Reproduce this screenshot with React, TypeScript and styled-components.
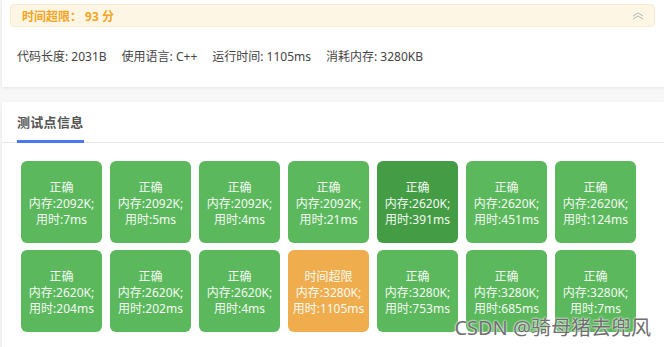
import * as React from "react";
import styled, {createGlobalStyle} from "styled-components";

type Status = "ok" | "okActive" | "tle";

type Point = { status: Status, mem: string, time: string }

const points: Point[] = [
    {status: "ok", mem: "2092K", time: "7ms"},
    {status: "ok", mem: "2092K", time: "5ms"},
    {status: "ok", mem: "2092K", time: "4ms"},
    {status: "ok", mem: "2092K", time: "21ms"},
    {status: "okActive", mem: "2620K", time: "391ms"},
    {status: "ok", mem: "2620K", time: "451ms"},
    {status: "ok", mem: "2620K", time: "124ms"},
    {status: "ok", mem: "2620K", time: "204ms"},
    {status: "ok", mem: "2620K", time: "202ms"},
    {status: "ok", mem: "2620K", time: "4ms"},
    {status: "tle", mem: "3280K", time: "1105ms"},
    {status: "ok", mem: "3280K", time: "753ms"},
    {status: "ok", mem: "3280K", time: "685ms"},
    {status: "ok", mem: "3280K", time: "7ms"},
]

const colors: Record<Status, string> = {
    ok: "#5cb85c",
    okActive: "#449d44",
    tle: "#f0ad4e",
}

const labels: Record<Status, string> = {
    ok: "正确",
    okActive: "正确",
    tle: "时间超限",
}

export default function App() {
    return <Page>
        <GlobalStyle/>

        <Panel>
            <Alert>
                <AlertTitle>时间超限： 93 分</AlertTitle>
                <svg width="12" height="8" viewBox="0 0 12 8" fill="none" stroke="#b8b8b8" strokeWidth="1">
                    <path d="M1 4 L6 1 L11 4"/>
                    <path d="M1 7 L6 4 L11 7"/>
                </svg>
            </Alert>
            <Stats>
                <span>代码长度: 2031B</span>
                <span>使用语言: C++</span>
                <span>运行时间: 1105ms</span>
                <span>消耗内存: 3280KB</span>
            </Stats>
        </Panel>

        <TestPanel>
            <TabBar>
                <Tab>测试点信息</Tab>
            </TabBar>
            <Grid>
                {points.map((p, i) =>
                    <Case key={i} color={colors[p.status]}>
                        <div>{labels[p.status]}</div>
                        <div>内存:{p.mem};</div>
                        <div>用时:{p.time}</div>
                    </Case>
                )}
            </Grid>
        </TestPanel>

        <Watermark>CSDN @骑母猪去兜风</Watermark>
    </Page>
}

const GlobalStyle = createGlobalStyle`
  body {
    margin: 0;
    background: #f7f7f7;
    font-family: "Noto Sans", "Noto Sans CJK SC", sans-serif;
  }
`

const Page = styled.div`
  position: relative;
  width: 664px;
  height: 347px;
  overflow: hidden;
  padding-left: 2px;
  box-sizing: border-box;
`

const Panel = styled.div`
  background: #fff;
  height: 87px;
  padding: 4px 9px 0 8px;
  box-sizing: border-box;
  box-shadow: 0 1px 3px rgba(0, 0, 0, 0.08);
`

const Alert = styled.div`
  display: flex;
  align-items: center;
  justify-content: space-between;
  height: 23px;
  padding: 0 10px 0 11px;
  box-sizing: border-box;
  background: #fdf6e4;
  border: 1px solid #f8ecd2;
  border-radius: 4px;
`

const AlertTitle = styled.span`
  color: #f5a524;
  font-size: 12px;
  font-weight: 700;
`

const Stats = styled.div`
  display: flex;
  gap: 15px;
  padding: 20px 0 0 7px;
  font-size: 12px;
  color: #444;
`

const TestPanel = styled.div`
  margin-top: 15px;
  background: #fff;
  height: 260px;
  box-shadow: 0 1px 3px rgba(0, 0, 0, 0.08);
`

const TabBar = styled.div`
  height: 40px;
  padding-left: 15px;
  border-bottom: 1px solid #e4e4e4;
  display: flex;
  align-items: flex-end;
`

const Tab = styled.div`
  font-size: 13px;
  font-weight: 700;
  color: #555;
  padding-bottom: 9px;
  border-bottom: 3px solid #4a78f0;
  margin-bottom: -1px;
  letter-spacing: 0.3px;
`

const Grid = styled.div`
  display: grid;
  grid-template-columns: repeat(7, 81px);
  grid-auto-rows: 82px;
  column-gap: 8px;
  row-gap: 7px;
  padding: 18px 0 0 19px;
`

const Case = styled.div<{ color: string }>`
  background: ${props => props.color};
  border-radius: 6px;
  display: flex;
  flex-direction: column;
  align-items: center;
  justify-content: center;
  color: #f4fbf4;
  font-size: 12px;
  line-height: 16px;
  padding-top: 3px;
  box-sizing: border-box;
`

const Watermark = styled.div`
  position: absolute;
  right: 13px;
  bottom: 8px;
  font-size: 20px;
  line-height: 22px;
  color: #6e6e6e;
  text-shadow: 0 0 2px #fff, 0 0 2px #fff;
`
